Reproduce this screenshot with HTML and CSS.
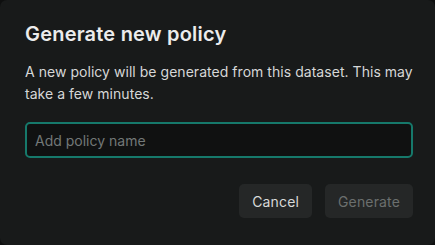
FILE: index.html
```html
<!DOCTYPE html>
<html lang="en">
<head>
  <meta charset="UTF-8" />
  <meta name="viewport" content="width=device-width, initial-scale=1.0"/>
  <title>Generate new policy</title>
  <link rel="stylesheet" href="styles.css">
</head>
<body>

<div class="dialog">
  <h3 class="dialog-title">Generate new policy</h3>
  <p class="dialog-text">A new policy will be generated from this dataset. This may take a few minutes.</p>
  <input type="text" class="policy-input" placeholder="Add policy name" />
  <div class="dialog-buttons">
    <button class="btn btn-cancel">Cancel</button>
    <button class="btn btn-generate" disabled>Generate</button>
  </div>
</div>

</body>
</html>
```

FILE: styles.css
```css
html, body {
  margin: 0;
  height: 100%;
  background: #0e0f0f;
}

body {
  font-family: Inter, "Noto Sans", sans-serif;
}

.dialog {
  box-sizing: border-box;
  height: 100%;
  background: #181a1a;
  border-radius: 7px;
  padding: 21px 22px 0 25px;
  display: flex;
  flex-direction: column;
}

.dialog-title {
  margin: 0;
  font-size: 20px;
  font-weight: 600;
  line-height: 26px;
  letter-spacing: 0.2px;
  color: #ececec;
}

.dialog-text {
  margin: 14px -14px 0 0;
  font-size: 14px;
  line-height: 22px;
  letter-spacing: 0.04px;
  color: #d6d7d7;
}

.policy-input {
  margin-top: 17px;
  height: 36px;
  box-sizing: border-box;
  background: #101111;
  border: 2px solid #16796b;
  border-radius: 5px;
  padding: 0 8px;
  font-family: inherit;
  font-size: 14px;
  color: #e0e0e0;
  outline: none;
}

.policy-input::placeholder {
  color: #737877;
}

.dialog-buttons {
  display: flex;
  justify-content: flex-end;
  gap: 13px;
  margin-top: 26px;
}

.btn {
  height: 34px;
  padding: 0 13px;
  border: none;
  border-radius: 5px;
  background: #252727;
  font-family: inherit;
  font-size: 14px;
  letter-spacing: 0.15px;
  cursor: pointer;
}

.btn-cancel { color: #d8d9d9; }
.btn-generate { color: #6b6f6e; cursor: default; }
```
